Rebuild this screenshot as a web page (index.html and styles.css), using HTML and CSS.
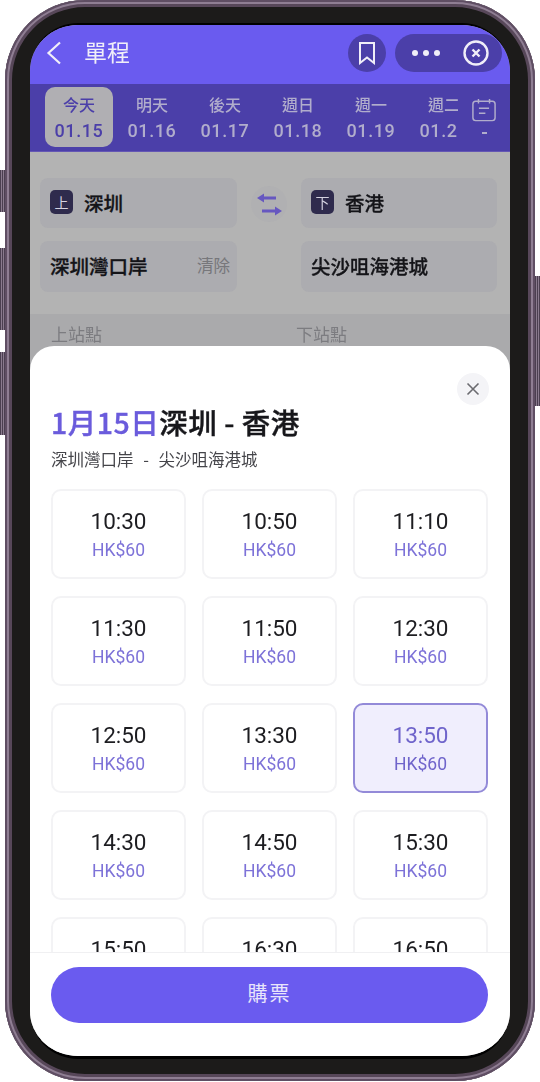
FILE: index.html
```html
<!DOCTYPE html>
<html lang="zh-Hant">
<head>
<meta charset="utf-8">
<title>單程</title>
<link rel="stylesheet" href="styles.css">
</head>
<body>
<div class="device">
  <span class="key key-l1"></span>
  <span class="key key-l2"></span>
  <span class="key key-l3"></span>
  <span class="key key-r1"></span>
  <div class="phone">
    <div class="screen">
      <header class="topbar">
        <svg class="back" width="16" height="24" viewBox="0 0 16 24"><path d="M14 1.500 2.500 12 14 22.500"/></svg>
        <h1 class="page-title">單程</h1>
        <div class="round-btn">
          <svg width="18" height="24" viewBox="0 0 18 24"><path d="M2 2h14v20l-7-5.500L2 22z"/></svg>
        </div>
        <div class="capsule">
          <span class="dots"><i></i><i></i><i></i></span>
          <svg width="26" height="26" viewBox="0 0 26 26"><circle cx="13" cy="13" r="11.500"/><path d="M9.500 9.500l7 7M16.500 9.500l-7 7"/></svg>
        </div>
      </header>
      <nav class="datebar">
        <div class="dates">
          <div class="date active"><span>今天</span><b>01.15</b></div>
          <div class="date"><span>明天</span><b>01.16</b></div>
          <div class="date"><span>後天</span><b>01.17</b></div>
          <div class="date"><span>週日</span><b>01.18</b></div>
          <div class="date"><span>週一</span><b>01.19</b></div>
          <div class="date"><span>週二</span><b>01.20</b></div>
        </div>
        <div class="cal">
          <svg width="26" height="24" viewBox="0 0 28 26"><path d="M5 3.500h18a3 3 0 0 1 3 3v15a3 3 0 0 1-3 3H5a3 3 0 0 1-3-3v-15a3 3 0 0 1 3-3zM8 1v5M20 1v5M8.500 11h11M8.500 16.500h7"/></svg>
          <i></i>
        </div>
      </nav>
      <section class="form">
        <div class="route">
          <div class="col">
            <div class="field city"><span class="tag">上</span>深圳</div>
            <div class="field stop">深圳灣口岸<span class="clear">清除</span></div>
          </div>
          <div class="swap">
            <div class="swap-btn">
              <svg width="26" height="24" viewBox="0 0 26 24"><path class="arrow" d="M7 6h13"/><path class="solid" d="M1 6l7-4.500v9z"/><path class="arrow" d="M6 19h13"/><path class="solid" d="M26 19l-7-4.500v9z"/></svg>
            </div>
          </div>
          <div class="col">
            <div class="field city"><span class="tag">下</span>香港</div>
            <div class="field stop">尖沙咀海港城</div>
          </div>
        </div>
        <div class="labels"><span>上站點</span><span>下站點</span></div>
      </section>
      <aside class="sheet">
        <button class="close" type="button" aria-label="關閉">
          <svg width="14" height="14" viewBox="0 0 14 14"><path d="M1.500 1.500l11 11M12.500 1.500l-11 11"/></svg>
        </button>
        <div class="sheet-body">
          <h2 class="sheet-title"><em>1月15日</em>深圳 - 香港</h2>
          <p class="sheet-sub">深圳灣口岸 - 尖沙咀海港城</p>
          <div class="times">
            <div class="slot"><b>10:30</b><span>HK$60</span></div>
            <div class="slot"><b>10:50</b><span>HK$60</span></div>
            <div class="slot"><b>11:10</b><span>HK$60</span></div>
            <div class="slot"><b>11:30</b><span>HK$60</span></div>
            <div class="slot"><b>11:50</b><span>HK$60</span></div>
            <div class="slot"><b>12:30</b><span>HK$60</span></div>
            <div class="slot"><b>12:50</b><span>HK$60</span></div>
            <div class="slot"><b>13:30</b><span>HK$60</span></div>
            <div class="slot selected"><b>13:50</b><span>HK$60</span></div>
            <div class="slot"><b>14:30</b><span>HK$60</span></div>
            <div class="slot"><b>14:50</b><span>HK$60</span></div>
            <div class="slot"><b>15:30</b><span>HK$60</span></div>
            <div class="slot"><b>15:50</b><span>HK$60</span></div>
            <div class="slot"><b>16:30</b><span>HK$60</span></div>
            <div class="slot"><b>16:50</b><span>HK$60</span></div>
          </div>
        </div>
        <footer class="sheet-foot">
          <button class="buy" type="button">購票</button>
        </footer>
      </aside>
    </div>
  </div>
</div>
</body>
</html>
```

FILE: styles.css
```css
* { box-sizing: border-box; }
html, body { margin: 0; padding: 0; background: #fff; }
body {
  width: 540px;
  height: 1082px;
  overflow: hidden;
  font-family: "Noto Sans CJK TC", "Noto Sans", sans-serif;
}
h1, h2, p { margin: 0; font-weight: inherit; }
button { font: inherit; border: 0; padding: 0; cursor: pointer; }

.device { position: relative; width: 540px; height: 1082px; padding: 0 5px; }
.key {
  position: absolute;
  width: 5px;
  background: repeating-linear-gradient(90deg, #4b3f50 0 1px, #8a7a8e 1px 2px);
}
.key-l1 { left: 0; top: 170px; height: 42px; }
.key-l2 { left: 0; top: 248px; height: 82px; }
.key-l3 { left: 0; top: 352px; height: 83px; }
.key-r1 { right: 0; top: 276px; height: 130px; }

.phone {
  width: 530px;
  height: 1081px;
  padding: 23px 25px 17px;
  border-radius: 80px;
  background: #1c1b1a;
  box-shadow: inset 0 0 0 2px #5f4e63, inset 0 0 0 4px #8f7e93, inset 0 0 0 7px #574759;
}
.screen {
  position: relative;
  width: 480px;
  height: 1036px;
  overflow: hidden;
  border-radius: 48px;
  border-top: 2px solid #000;
  border-bottom: 3px solid #000;
  background: #b3b3b3;
  filter: blur(0.35px);
}

.topbar {
  display: flex;
  align-items: center;
  height: 59px;
  padding: 0 8px 4px 16px;
  background: #6a5bef;
  color: #f0eef8;
}
.back { fill: none; stroke: #f0eef8; stroke-width: 2.2; }
.page-title { margin: 0 0 3px 22px; font-size: 23px; line-height: 1; flex: 1; }
.round-btn {
  display: flex;
  align-items: center;
  justify-content: center;
  width: 38px;
  height: 38px;
  border-radius: 50%;
  background: #4b3fa9;
}
.round-btn svg { fill: none; stroke: #f0eef8; stroke-width: 2; }
.capsule {
  display: flex;
  align-items: center;
  justify-content: space-between;
  width: 107px;
  height: 38px;
  margin-left: 9px;
  padding: 0 13px 0 17px;
  border-radius: 19px;
  background: #4b3fa9;
}
.capsule svg { fill: none; stroke: #f0eef8; stroke-width: 2.4; }
.dots { display: flex; gap: 5px; }
.dots i { width: 6px; height: 6px; border-radius: 50%; background: #f0eef8; }

.datebar {
  display: flex;
  height: 68px;
  padding: 3px 0 0 15px;
  background: #4b3fa9;
  border-bottom: 1px solid #6457b4;
}
.dates { display: flex; width: 413px; overflow: hidden; }
.date {
  display: flex;
  flex: none;
  flex-direction: column;
  align-items: center;
  width: 68px;
  height: 60px;
  margin-right: 5px;
  padding-top: 7px;
  border-radius: 10px;
  color: #b1adcc;
}
.date span { font-size: 16px; line-height: 20px; font-weight: 500; }
.date b { font-size: 18px; line-height: 26px; font-weight: 500; letter-spacing: 0.6px; white-space: nowrap; font-family: "Roboto", sans-serif; margin-top: 4px; }
.date.active { background: #b0afb3; color: #4b3fa9; }
.cal {
  display: flex;
  flex-direction: column;
  align-items: center;
  width: 52px;
  padding: 11px 0 0 0;
  color: #b1adcc;
}
.cal svg { fill: none; stroke: #b1adcc; stroke-width: 1.600; }
.cal i { width: 5px; height: 2px; margin-top: 10px; background: #b1adcc; }

.form { background: #b3b3b3; height: 900px; }
.route {
  display: grid;
  grid-template-columns: 197px 1fr 196px;
  padding: 26px 13px 22px 10px;
  background: #b3b3b3;
}
.col { display: flex; flex-direction: column; gap: 13px; }
.field {
  display: flex;
  align-items: center;
  border-radius: 8px;
  background: #acacb0;
  color: #141418;
  font-size: 19.500px;
  font-weight: 500;
  -webkit-text-stroke: 0.3px #141418;
}
.city { height: 50px; padding: 0 0 2px 10px; gap: 11px; }
.stop { height: 51px; padding: 0 7px 3px 10px; justify-content: space-between; }
.tag {
  display: flex;
  align-items: center;
  justify-content: center;
  width: 23px;
  height: 24px;
  border-radius: 5px;
  background: #2f2b4d;
  color: #d4d2e0;
  font-size: 14px;
  font-weight: 400;
  -webkit-text-stroke: 0;
}
.clear { font-size: 16.500px; font-weight: 400; color: #77777b; -webkit-text-stroke: 0; }
.swap { display: flex; justify-content: center; padding-top: 8px; }
.swap-btn {
  display: flex;
  align-items: center;
  justify-content: center;
  width: 36px;
  height: 36px;
  border-radius: 50%;
  background: #b0b0b2;
}
.swap .solid { fill: #6657c0; }
.swap .arrow { fill: none; stroke: #6657c0; stroke-width: 3; }
.labels {
  display: grid;
  grid-template-columns: 245px 1fr;
  padding: 8px 0 0 21px;
  background: #aaaaac;
  height: 60px;
  font-size: 17px;
  line-height: 24px;
  color: #7c7c80;
}

.sheet {
  position: absolute;
  left: 0;
  right: 0;
  top: 321px;
  bottom: 0;
  display: flex;
  flex-direction: column;
  border-radius: 24px 24px 0 0;
  background: #fff;
}
.close {
  position: absolute;
  top: 27px;
  right: 21px;
  display: flex;
  align-items: center;
  justify-content: center;
  width: 32px;
  height: 32px;
  border-radius: 50%;
  background: #f4f4f7;
}
.close svg { fill: none; stroke: #6b6b70; stroke-width: 1.600; }
.sheet-body { flex: 1; min-height: 0; overflow: hidden; padding: 56px 22px 0 21px; }
.sheet-title { font-size: 28.500px; line-height: 40px; font-weight: 500; letter-spacing: 0.500px; color: #17171b; -webkit-text-stroke: 0.4px currentColor; white-space: nowrap; }
.sheet-title em { font-style: normal; color: #6a5bdc; }
.sheet-sub { margin-top: 5px; font-size: 16.500px; line-height: 24px; word-spacing: 6px; color: #45454a; }
.times {
  display: grid;
  grid-template-columns: repeat(3, 135px);
  grid-auto-rows: 90px;
  column-gap: 16px;
  row-gap: 17px;
  margin-top: 18px;
}
.slot {
  display: flex;
  flex-direction: column;
  align-items: center;
  padding-top: 16px;
  border: 2px solid #f3f3f5;
  border-radius: 10px;
  background: #fff;
}
.slot b { font-family: "Roboto", sans-serif; font-size: 22.500px; line-height: 29px; font-weight: 400; color: #1d1d21; }
.slot span { margin-top: 2px; font-family: "Roboto", sans-serif; font-size: 17.500px; line-height: 24px; color: #7d72d8; }
.slot.selected { background: #f0eefd; border-color: #938ad8; }
.slot.selected b { color: #6f64cb; }
.slot.selected span { color: #6f64cb; }
.sheet-foot {
  flex: none;
  height: 104px;
  padding: 14px 22px 0 21px;
  border-top: 1px solid #f0f0f2;
  background: #fff;
}
.buy {
  display: block;
  width: 437px;
  height: 56px;
  padding-bottom: 5px;
  border-radius: 28px;
  background: #6a5bef;
  color: #e8e5fb;
  font-size: 20px;
  letter-spacing: 2px;
}
```
